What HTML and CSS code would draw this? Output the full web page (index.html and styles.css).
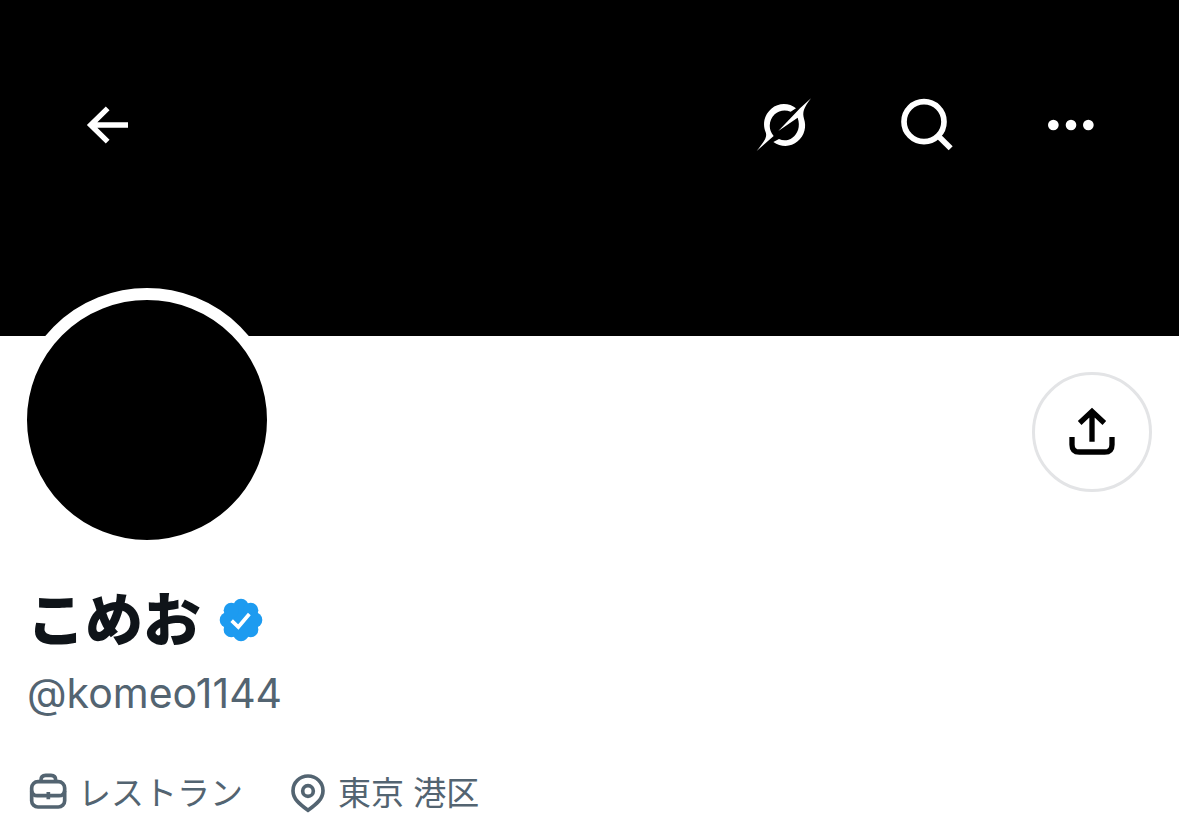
FILE: index.html
```html
<!DOCTYPE html>
<html lang="ja">
<head>
<meta charset="utf-8">
<meta name="viewport" content="width=device-width, initial-scale=1">
<title>こめお (@komeo1144)</title>
<link rel="stylesheet" href="styles.css">
</head>
<body>
<header class="banner">
  <button class="nav-button" type="button" aria-label="戻る">
    <svg class="nav-icon" viewBox="0 0 240 240" fill="none" stroke="currentColor" stroke-width="16"><path d="M119 70 68 120l51 50M68 120h112"/></svg>
  </button>
  <div class="actions">
    <button class="nav-button" type="button" aria-label="Grok">
      <svg class="nav-icon" viewBox="15 0 240 240" fill="currentColor">
        <path d="M168 70C148 53 116 52 94 71C72 90 67 118 77 142C82 155 75 166 50 198L101 153C83 132 87 104 104 88C117 76 135 73 152 80Z"/>
        <path d="M213 40L180 70L115 138L173 98C182 124 173 147 157 158C145 167 130 168 117 162L100 171C123 187 153 187 173 169C194 151 200 125 192 101C187 82 190 70 213 40Z"/>
      </svg>
    </button>
    <button class="nav-button" type="button" aria-label="検索">
      <svg class="nav-icon" viewBox="9 0 240 240" fill="none" stroke="currentColor" stroke-width="17"><circle cx="117" cy="110" r="60"/><path d="m159 152 38 38"/></svg>
    </button>
    <button class="nav-button" type="button" aria-label="もっと見る">
      <svg class="nav-icon" viewBox="3 -45 240 240" fill="currentColor"><circle cx="70" cy="75" r="16"/><circle cx="123" cy="75" r="16"/><circle cx="175" cy="75" r="16"/></svg>
    </button>
  </div>
</header>
<main class="profile">
  <div class="profile-top">
    <div class="avatar" role="img" aria-label="こめお"></div>
    <button class="share" type="button" aria-label="共有">
      <svg class="share-icon" viewBox="45 45 342 342" fill="none" stroke="currentColor" stroke-width="16"><path d="M216 245v-90M179 189l37-35 37 35M156 231v23q0 22 22 22h76q22 0 22-22v-23"/></svg>
    </button>
  </div>
  <div class="name-row">
    <h1 class="name">こめお</h1>
    <svg class="badge" viewBox="0 0 132 132" role="img" aria-label="認証済みアカウント">
      <g fill="#1d9bf0"><circle cx="66" cy="66" r="50"/><circle cx="66" cy="25" r="23"/><circle cx="95" cy="37" r="23"/><circle cx="107" cy="66" r="23"/><circle cx="95" cy="95" r="23"/><circle cx="66" cy="107" r="23"/><circle cx="37" cy="95" r="23"/><circle cx="25" cy="66" r="23"/><circle cx="37" cy="37" r="23"/></g>
      <path d="m38 68 20 19 33-39" fill="none" stroke="#fff" stroke-width="11"/>
    </svg>
  </div>
  <p class="handle">@komeo1144</p>
  <ul class="meta">
    <li class="meta-item">
      <svg class="meta-icon" viewBox="0 0 126 126" fill="none" stroke="currentColor" stroke-width="11"><rect x="14" y="29" width="99" height="76" rx="19"/><path d="M42 29v-5q0-14 14-14h16q14 0 14 14v5M14 56q2 15 17 15h65q15 0 17-15M64 60v22"/></svg>
      <span>レストラン</span>
    </li>
    <li class="meta-item">
      <svg class="meta-icon" viewBox="0 0 126 126" fill="none" stroke="currentColor" stroke-width="11"><path d="M63 115C36 95 18 80 18 56a45 44 0 0 1 90 0C108 80 90 95 63 115Z"/><circle cx="63" cy="57" r="16"/></svg>
      <span>東京 港区</span>
    </li>
  </ul>
</main>
</body>
</html>
```
FILE: styles.css
```css
* {
  box-sizing: border-box;
}

body {
  margin: 0;
  background: #fff;
  color: #0f1419;
  font-family: Inter, "Noto Sans CJK JP", sans-serif;
}

button {
  padding: 0;
  border: 0;
  background: none;
  color: inherit;
  cursor: pointer;
}

svg {
  display: block;
  flex: none;
}

.banner {
  display: flex;
  justify-content: space-between;
  align-items: flex-start;
  height: 336px;
  padding: 85px 68px 0;
  background: #000;
  color: #fff;
}

.actions {
  display: flex;
  gap: 63px;
}

.nav-icon {
  width: 80px;
  height: 80px;
}

.profile {
  padding: 0 27px 20px;
}

.profile-top {
  display: flex;
  justify-content: space-between;
  align-items: flex-start;
}

.avatar {
  width: 264px;
  height: 264px;
  margin: -48px 0 0 -12px;
  border: 12px solid #fff;
  border-radius: 50%;
  background: #000;
}

.share {
  margin-top: 36px;
  border: 3px solid #e3e4e6;
  border-radius: 50%;
  color: #000;
}

.share-icon {
  width: 114px;
  height: 114px;
}

.name-row {
  display: flex;
  align-items: center;
  gap: 18px;
  margin-top: 28px;
}

.name {
  margin: 0;
  font-size: 58px;
  font-weight: 900;
  line-height: 80px;
}

.badge {
  width: 44px;
  height: 44px;
}

.handle {
  margin: 8px 0 0;
  color: #536471;
  font-size: 41px;
  line-height: 50px;
}

.meta {
  display: flex;
  flex-wrap: wrap;
  gap: 44px;
  margin: 48px 0 0;
  padding: 0;
  color: #536471;
  font-size: 33px;
  line-height: 54px;
  list-style: none;
}

.meta-item {
  display: flex;
  align-items: center;
  gap: 9px;
}

.meta-icon {
  width: 42px;
  height: 42px;
}
```
